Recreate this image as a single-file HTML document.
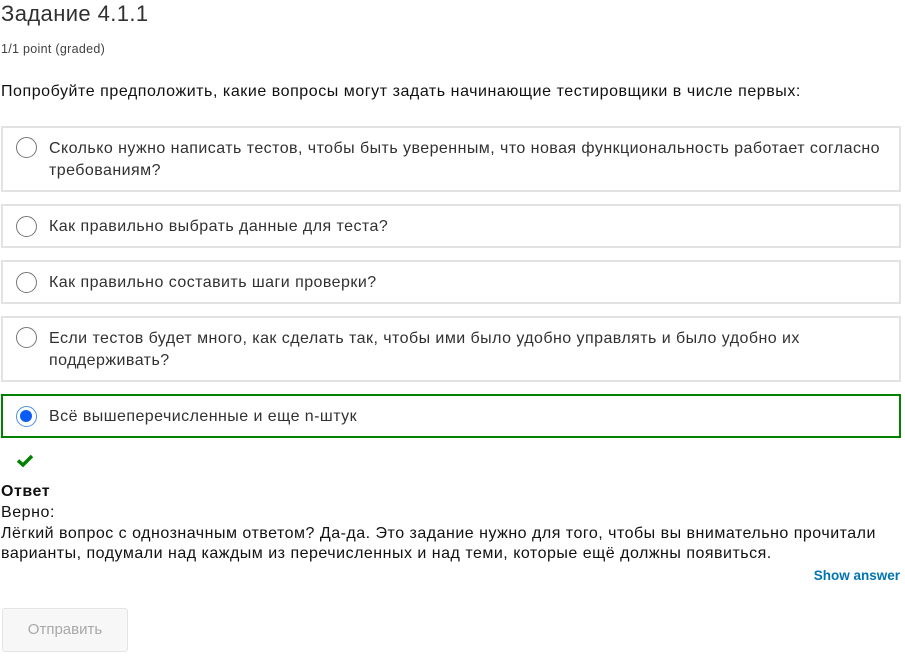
<!DOCTYPE html>
<html><head><meta charset="utf-8"><style>
body{margin:0;width:905px;height:657px;background:#fff;font-family:"Liberation Sans","DejaVu Sans",sans-serif;color:#313131;position:relative;overflow:hidden}
.a{position:absolute;white-space:nowrap}
.t{font-size:16px;letter-spacing:0.55px}
.box{position:absolute;left:1px;width:900px;border:2px solid #e2e2e2;box-sizing:border-box}
.r{position:absolute;left:13px;width:21px;height:21px;border:1px solid #767676;border-radius:50%;box-sizing:border-box;background:#fff}
.lbl{position:absolute;left:46px;font-size:16px;letter-spacing:0.45px;line-height:22px;color:#313131}
</style></head><body>
<div class="a" style="left:1px;top:1px;font-size:22px;color:#313131;letter-spacing:0.4px">Задание 4.1.1</div>
<div class="a" style="left:1px;top:42px;font-size:12.5px;color:#414141;letter-spacing:0.3px">1/1 point (graded)</div>
<div class="a t" style="left:1px;top:83px;color:#111">Попробуйте предположить, какие вопросы могут задать начинающие тестировщики в числе первых:</div>

<div class="box" style="top:126px;height:66px"><div class="r" style="top:9px"></div><div class="lbl" style="top:10px">Сколько нужно написать тестов, чтобы быть уверенным, что новая функциональность работает согласно<br>требованиям?</div></div>
<div class="box" style="top:204px;height:44px"><div class="r" style="top:10px"></div><div class="lbl" style="top:10px">Как правильно выбрать данные для теста?</div></div>
<div class="box" style="top:260px;height:44px"><div class="r" style="top:10px"></div><div class="lbl" style="top:10px">Как правильно составить шаги проверки?</div></div>
<div class="box" style="top:316px;height:66px"><div class="r" style="top:9px"></div><div class="lbl" style="top:10px">Если тестов будет много, как сделать так, чтобы ими было удобно управлять и было удобно их<br>поддерживать?</div></div>
<div class="box" style="top:394px;height:44px;border-color:#008100"><div class="r" style="top:10px;border:1.5px solid #4a90e2"><div style="position:absolute;left:3px;top:3px;width:12px;height:12px;border-radius:50%;background:#0a5cf5"></div></div><div class="lbl" style="top:10px">Всё вышеперечисленные и еще n-штук</div></div>

<svg class="a" style="left:16px;top:453px" width="18" height="15" viewBox="0 0 18 15"><path d="M2 7.5 L7 12 L16 3" stroke="#008100" stroke-width="3.5" fill="none"/></svg>

<div class="a t" style="left:1px;top:483px;font-weight:bold;color:#111">Ответ</div>
<div class="a t" style="left:1px;top:504px;color:#111">Верно:</div>
<div class="a t" style="left:1px;top:524px;color:#111;line-height:20px;letter-spacing:0.5px">Лёгкий вопрос с однозначным ответом? Да-да. Это задание нужно для того, чтобы вы внимательно прочитали<br>варианты, подумали над каждым из перечисленных и над теми, которые ещё должны появиться.</div>
<div class="a" style="right:5px;top:568px;font-size:13.5px;font-weight:bold;color:#0075b4">Show answer</div>
<div class="a" style="left:2px;top:608px;width:126px;height:44px;border:1px solid #e4e4e4;border-radius:3px;background:#f7f7f7;box-sizing:border-box;font-size:15px;color:#a8a8a8;text-align:center;line-height:42px">Отправить</div>
</body></html>
